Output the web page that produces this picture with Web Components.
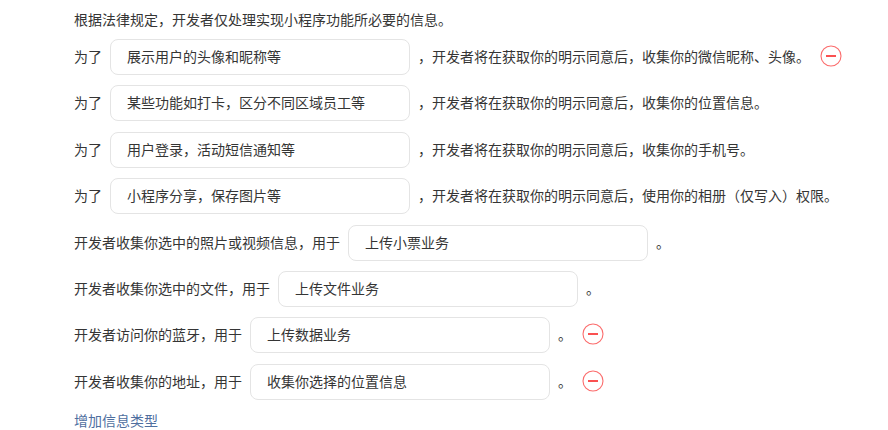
<!DOCTYPE html>
<html>
<head>
<meta charset="utf-8">
<style>
  html, body { margin: 0; padding: 0; background: #fff; overflow: hidden; }
</style>
</head>
<body>
<privacy-form></privacy-form>
<script>
class RemoveIcon extends HTMLElement {
    constructor() {
        super();
        this.attachShadow({ mode: 'open' });
        this.shadowRoot.innerHTML = `
            <style>
                :host { display: inline-flex; width: 22px; height: 22px; }
                svg { display: block; }
            </style>
            <svg width="22" height="22" viewBox="0 0 22 22" fill="none" stroke="#fa5151">
                <circle cx="11" cy="11" r="10" stroke-width="1.1" stroke-opacity=".85"/>
                <path d="M6 11h10" stroke-width="2"/>
            </svg>
        `;
    }
}

class TextBox extends HTMLElement {
    constructor() {
        super();
        this.attachShadow({ mode: 'open' });
        this.shadowRoot.innerHTML = `
            <style>
                :host {
                    display: flex;
                    align-items: center;
                    box-sizing: border-box;
                    width: 300px;
                    height: 36px;
                    padding: 0 16px 2px;
                    border: 1px solid #e4e4e4;
                    border-radius: 8px;
                    background: #fff;
                    color: #353535;
                    white-space: nowrap;
                }
            </style>
            <slot></slot>
        `;
    }
}

class InfoRow extends HTMLElement {
    constructor() {
        super();
        this.attachShadow({ mode: 'open' });
        this.shadowRoot.innerHTML = `
            <style>
                :host {
                    display: flex;
                    align-items: center;
                    height: 36px;
                    white-space: nowrap;
                }
                .before { margin-right: 8px; padding-bottom: 2px; }
                .after { margin-left: 8px; padding-bottom: 2px; }
                ::slotted(remove-icon) { margin: 0 0 2px 10px; }
            </style>
            <span class="before"></span>
            <text-box></text-box>
            <span class="after"></span>
            <slot></slot>
        `;
    }

    connectedCallback() {
        this.shadowRoot.querySelector('.before').textContent = this.getAttribute('before');
        this.shadowRoot.querySelector('text-box').textContent = this.getAttribute('value');
        this.shadowRoot.querySelector('.after').textContent = this.getAttribute('after');
    }
}

class PrivacyForm extends HTMLElement {
    constructor() {
        super();
        this.attachShadow({ mode: 'open' });
        const why = '，开发者将在获取你的明示同意后，';
        const rows = [
            ['为了', '展示用户的头像和昵称等', why + '收集你的微信昵称、头像。', true],
            ['为了', '某些功能如打卡，区分不同区域员工等', why + '收集你的位置信息。', false],
            ['为了', '用户登录，活动短信通知等', why + '收集你的手机号。', false],
            ['为了', '小程序分享，保存图片等', why + '使用你的相册（仅写入）权限。', false],
            ['开发者收集你选中的照片或视频信息，用于', '上传小票业务', '。', false],
            ['开发者收集你选中的文件，用于', '上传文件业务', '。', false],
            ['开发者访问你的蓝牙，用于', '上传数据业务', '。', true],
            ['开发者收集你的地址，用于', '收集你选择的位置信息', '。', true],
        ];
        this.shadowRoot.innerHTML = `
            <style>
                :host {
                    display: flex;
                    flex-direction: column;
                    padding: 10px 0 0 74px;
                    font: 14px "Liberation Sans", "Noto Sans CJK SC", sans-serif;
                    color: #353535;
                }
                .intro { line-height: 20px; margin-bottom: 9px; }
                .rows { display: flex; flex-direction: column; gap: 10.4px; }
                .add { margin-top: 11px; line-height: 20px; color: #4f6f9f; }
            </style>
            <div class="intro">根据法律规定，开发者仅处理实现小程序功能所必要的信息。</div>
            <div class="rows">
                ${rows.map(r => `<info-row before="${r[0]}" value="${r[1]}" after="${r[2]}">${r[3] ? '<remove-icon></remove-icon>' : ''}</info-row>`).join('')}
            </div>
            <div class="add">增加信息类型</div>
        `;
    }
}

customElements.define('remove-icon', RemoveIcon);
customElements.define('text-box', TextBox);
customElements.define('info-row', InfoRow);
customElements.define('privacy-form', PrivacyForm);
</script>
</body>
</html>
